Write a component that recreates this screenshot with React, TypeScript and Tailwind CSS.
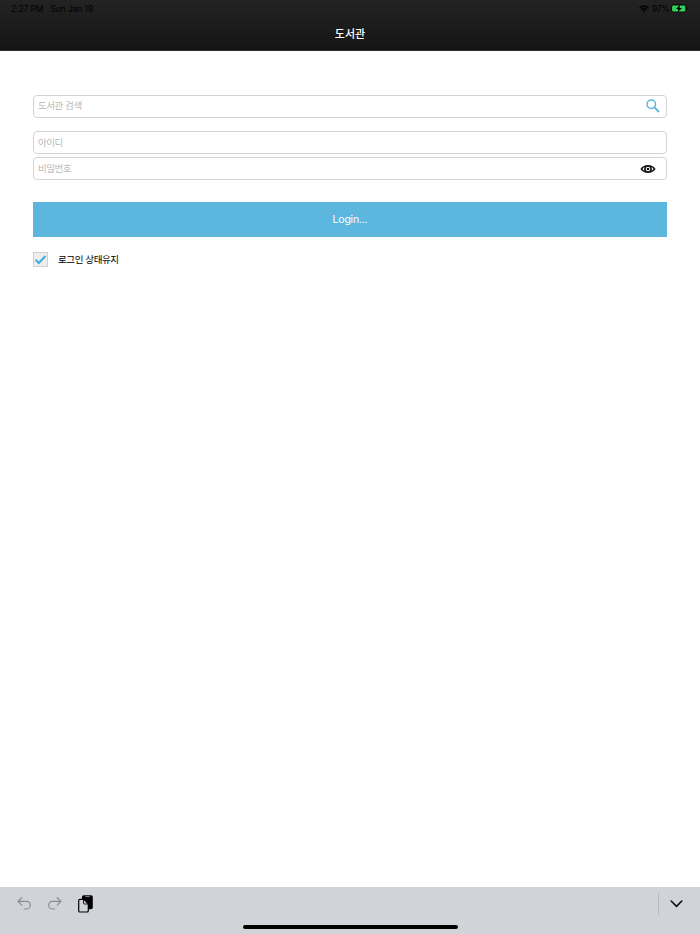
import { useState } from 'react';

const StatusBar = () => (
  <div className="flex h-4 items-end justify-between pl-[11px] pr-[12px] text-[8.5px] leading-[14px] text-black">
    <div className="flex gap-[7px] tracking-[-0.1px]">
      <span>2:27 PM</span>
      <span>Sun Jan 19</span>
    </div>
    <div className="flex h-[15px] items-center">
      <svg className="h-[8px] w-[10px]" viewBox="0 0 20 16" fill="none" stroke="black" strokeWidth="2.8">
        <path d="M1 6 Q10 -2 19 6" />
        <path d="M4.5 9.6 Q10 4.8 15.5 9.6" />
        <path d="M10 15 L6.8 12 Q10 9.2 13.2 12 Z" fill="black" stroke="none" />
      </svg>
      <span className="ml-[3px] w-[18px] whitespace-nowrap tracking-[-0.3px]">97%</span>
      <svg className="ml-px h-[9px] w-[17px]" viewBox="0 0 17 9">
        <rect x="0.5" y="0.8" width="14.6" height="7.2" rx="2.2" fill="#101010" stroke="#0b0b0b" />
        <rect x="1.1" y="1.5" width="13.2" height="6" rx="1.3" fill="#35d158" />
        <path d="M9.3 0.6 L5 5 H7.3 L6.6 8.3 L11 3.9 H8.5 Z" fill="black" />
        <path d="M15.8 3.1 Q17.4 4.4 15.8 5.7 Z" fill="#080808" />
      </svg>
    </div>
  </div>
);

const LoginForm = () => {
  const [keepLogin, setKeepLogin] = useState(true);
  const [showPassword, setShowPassword] = useState(false);

  return (
    <form className="flex flex-col px-[33px] pt-[44px]" onSubmit={(e) => e.preventDefault()}>
      {/* Library search */}
      <div className="flex h-[23px] items-center rounded-[4px] border border-[#d2d3d5] pl-1 pr-[6px]">
        <input
          type="text"
          placeholder="도서관 검색"
          className="h-[22px] min-w-0 flex-1 pb-[3px] text-[9.5px] tracking-[-0.45px] outline-none placeholder:text-[#b9b9bb]"
        />
        <button type="button" aria-label="search">
          <svg className="mb-px h-[14px] w-[14px]" viewBox="0 0 14 14" fill="none" stroke="#5cb6dd">
            <circle cx="5.3" cy="5.3" r="4.2" strokeWidth="1.5" />
            <path d="M8.4 8.4 L13 13" strokeWidth="1.9" />
          </svg>
        </button>
      </div>

      {/* Account */}
      <div className="mt-[13px] flex h-[23px] items-center rounded-[4px] border border-[#d2d3d5] px-1">
        <input
          type="text"
          placeholder="아이디"
          className="h-[22px] min-w-0 flex-1 pb-px text-[9.5px] tracking-[-0.45px] outline-none placeholder:text-[#b9b9bb]"
        />
      </div>
      <div className="mt-[3px] flex h-[23px] items-center rounded-[4px] border border-[#d2d3d5] pl-1 pr-[10px]">
        <input
          type={showPassword ? 'text' : 'password'}
          placeholder="비밀번호"
          className="h-[22px] min-w-0 flex-1 pb-px text-[9.5px] tracking-[-0.45px] outline-none placeholder:text-[#b9b9bb]"
        />
        <button type="button" aria-label="show password" onClick={() => setShowPassword(!showPassword)}>
          <svg className="h-[10px] w-[16px]" viewBox="0 0 16 10">
            <path d="M0.4 5 C4 -0.4 12 -0.4 15.6 5 C12 10.4 4 10.4 0.4 5 Z" fill="#111" />
            <path d="M2.5 5 Q3.3 3.8 4.4 3.1 Q3.7 5 4.4 6.9 Q3.3 6.2 2.5 5 Z M13.5 5 Q12.7 3.8 11.6 3.1 Q12.3 5 11.6 6.9 Q12.7 6.2 13.5 5 Z" fill="white" />
            <circle cx="8" cy="5" r="2.3" fill="white" />
            <circle cx="8" cy="5" r="1.3" fill="#111" />
          </svg>
        </button>
      </div>

      <button
        type="submit"
        className="mt-[22px] h-[34.5px] bg-[#5cb6dd] pt-px text-[10.5px] tracking-[-0.2px] text-white"
      >
        Login...
      </button>

      {/* Keep me logged in */}
      <label className="mt-[15.5px] flex items-center gap-[10px] text-[9.5px] leading-[15px] text-black">
        <input
          type="checkbox"
          className="sr-only"
          checked={keepLogin}
          onChange={(e) => setKeepLogin(e.target.checked)}
        />
        <span className="flex h-[15px] w-[15px] items-center justify-center border border-[#cfcfcf] bg-[#eeeeee]">
          {keepLogin && (
            <svg className="h-[11px] w-[11px]" viewBox="0 0 11 11" fill="none" stroke="#3daee3" strokeWidth="2">
              <path d="M0.5 5.7 L3.8 9 L10.5 2" />
            </svg>
          )}
        </span>
        <span className="tracking-[-0.4px]">로그인 상태유지</span>
      </label>
    </form>
  );
};

const KeyboardBar = () => (
  <footer className="flex h-[47.5px] flex-col items-center bg-[#d0d4d9]">
    <div className="flex h-[34.5px] w-full items-center pl-[17px] pr-[17px]">
      <svg className="h-[14px] w-[14px]" viewBox="0 0 14 14" fill="none" stroke="#898c90" strokeWidth="1.2" strokeLinecap="round" strokeLinejoin="round">
        <path d="M4.8 0.7 L1 4.4 L4.8 8.1 M1.2 4.4 H9.5 A3.8 3.8 0 0 1 9.5 12 H7.2" />
      </svg>
      <svg className="ml-[17px] h-[14px] w-[14px]" viewBox="0 0 14 14" fill="none" stroke="#898c90" strokeWidth="1.2" strokeLinecap="round" strokeLinejoin="round">
        <path d="M9.2 0.7 L13 4.4 L9.2 8.1 M12.8 4.4 H4.5 A3.8 3.8 0 0 0 4.5 12 H6.8" />
      </svg>
      <svg className="ml-[16px] h-[18px] w-[15px]" viewBox="0 0 15 18">
        <rect x="4" y="0.3" width="10.8" height="14" rx="1.8" fill="black" />
        <path d="M7.7 1.6 H11.3" stroke="#a9acb0" strokeWidth="0.8" strokeLinecap="round" />
        <path d="M2 4.3 H5.8 L10.3 8.8 V15.7 A1.3 1.3 0 0 1 9 17 H2 A1.3 1.3 0 0 1 0.7 15.7 V5.6 A1.3 1.3 0 0 1 2 4.3 Z" fill="#d0d4d9" stroke="black" strokeWidth="1.2" />
        <path d="M5.5 4.5 V8 A1 1 0 0 0 6.5 9 H10" fill="none" stroke="black" strokeWidth="0.9" />
      </svg>
      <div className="ml-auto h-[22px] w-px bg-[#b8bbbf]" />
      <svg className="ml-[11px] h-[8px] w-[13px]" viewBox="0 0 13 8" fill="none" stroke="#111" strokeWidth="1.6" strokeLinecap="round" strokeLinejoin="round">
        <path d="M1.2 1 L6.5 6.4 L11.8 1" />
      </svg>
    </div>
    <div className="mt-[3.5px] h-[4px] w-[215px] rounded-full bg-black" />
  </footer>
);

export default function App() {
  return (
    <div className="flex h-[934px] w-[700px] flex-col overflow-hidden bg-white font-['Inter','Noto_Sans_CJK_KR',sans-serif]">
      <header className="h-[51px] border-b border-[#303030] bg-linear-to-b from-[#232323] to-[#151515]">
        <StatusBar />
        <h1 className="mt-[10px] text-center text-[11px] font-medium leading-4 text-white">도서관</h1>
      </header>
      <main className="flex-1">
        <LoginForm />
      </main>
      <KeyboardBar />
    </div>
  );
}
